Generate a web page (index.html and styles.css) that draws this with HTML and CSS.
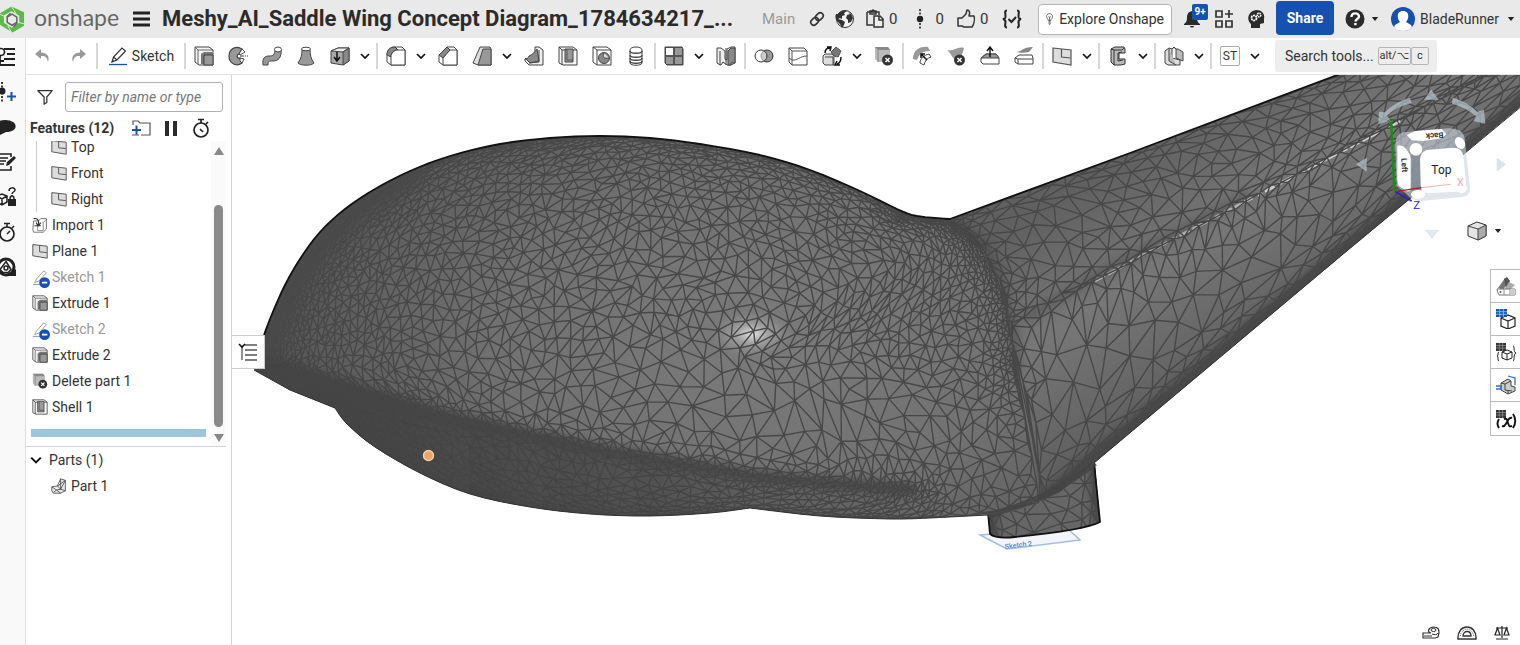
FILE: index.html
```html
<!DOCTYPE html>
<html lang="en">
<head>
<meta charset="utf-8">
<title>Meshy_AI_Saddle Wing Concept Diagram</title>
<link rel="stylesheet" href="styles.css">
</head>
<body>
<svg class="sprite" aria-hidden="true">
  <symbol id="undo" viewBox="0 0 20 20"><path d="M8 3 2 8l6 5v-3c4-.5 6 1 7 6 2-6-1-9-7-9.500z" fill="#999"/></symbol>
  <symbol id="redo" viewBox="0 0 20 20"><path d="M12 3l6 5-6 5v-3c-4-.5-6 1-7 6-2-6 1-9 7-9.500z" fill="#999"/></symbol>
  <symbol id="pencil" viewBox="0 0 20 20"><path d="M1 18.500h18" stroke="#1651b0" stroke-width="1.300"/><path d="M4 16l1.500-5L14 2l3.500 3L9 14zM5.500 11 9 14" fill="#fff" stroke="#333" stroke-width="1.200"/><path d="m4 16 .7-2.300L6.500 15z" fill="#333"/></symbol>
  <symbol id="extrude" viewBox="0 0 20 20"><path d="M1 1h14l4 3v15H5l-4-3z" fill="#f4f4f4" stroke="#444"/><path d="M4 4v14M1 1l3 3h15" fill="none" stroke="#666"/><path d="M7 8l3-2h9v12H7z" fill="#777"/><path d="M10 9h9v10h-9z" fill="#999" stroke="#444"/></symbol>
  <symbol id="revolve" viewBox="0 0 20 20"><path d="M14 3C8-1 1 3 1 10c0 8 8 11 13 7l-2-5c-3 1-4-3-1-4z" fill="#999" stroke="#444" stroke-width="1.200"/><path d="M14 3l3 3-5 3-1-1zM12 12l4 1-2 4-2-2z" fill="#fff" stroke="#444"/><path d="M12 10h8" stroke="#333" stroke-dasharray="4 1 1 1"/></symbol>
  <symbol id="sweep" viewBox="0 0 20 20"><path d="M1 19c-1-7 2-9 6-9s6-1 6-7h6c1 9-3 12-8 12-4 0-5 0-5 4z" fill="#999" stroke="#444"/><ellipse cx="16" cy="3.500" rx="3.500" ry="2.500" fill="#fff" stroke="#444"/></symbol>
  <symbol id="loft" viewBox="0 0 20 20"><path d="M6 3h8c0 6 1 10 4 14-3 3-13 3-16 0C5 13 6 9 6 3z" fill="#999" stroke="#444"/><ellipse cx="10" cy="3" rx="4.500" ry="1.800" fill="#fff" stroke="#444"/></symbol>
  <symbol id="thicken" viewBox="0 0 20 20"><path d="M1 5l7-3 11 0v13l-6 4-12-2z" fill="#aaa" stroke="#444"/><path d="M1 5l7-3h11l-6 4z" fill="#eee" stroke="#444"/><path d="M13 6v13l6-4V2z" fill="#888" stroke="#444"/><path d="M7 6v8m-3-3 3 4 3-4" stroke="#111" stroke-width="1.500" fill="none"/></symbol>
  <symbol id="chev" viewBox="0 0 10 6"><path d="m1 1 4 4 4-4" fill="none" stroke="#111" stroke-width="1.700"/></symbol>
  <symbol id="fillet" viewBox="0 0 20 20"><path d="M1 16V9c0-5 3-8 8-8h7l3 3v15H5z" fill="#fff" stroke="#444"/><path d="M1 9c0-5 3-8 8-8l3 3c-5 0-7 3-7 7z" fill="#888" stroke="#444"/><path d="M5 19v-8c0-4 3-7 7-7h7v15z" fill="#fff" stroke="#444"/></symbol>
  <symbol id="chamfer" viewBox="0 0 20 20"><path d="M1 16V9l8-8h7l3 3v15H5z" fill="#fff" stroke="#444"/><path d="M1 9l8-8 3 3-7 8z" fill="#888" stroke="#444"/><path d="M5 19v-7l7-8h7v15z" fill="#fff" stroke="#444"/></symbol>
  <symbol id="draft" viewBox="0 0 20 20"><path d="M1 17 8 1h10l1 2v16H6z" fill="#ddd" stroke="#444"/><path d="M6 19 11 3h8v16z" fill="#999" stroke="#444"/></symbol>
  <symbol id="rib" viewBox="0 0 20 20"><path d="M11 1h4l4 3v15H5l-4-4v-2h4c4-1 6-4 6-8z" fill="#eee" stroke="#444"/><path d="M1 12c1 1 3 1 4-2 3-1 6-4 8-7l2 12-9 2z" fill="#888" stroke="#444"/><path d="M15 4v12l-10 1" fill="none" stroke="#444"/></symbol>
  <symbol id="shell" viewBox="0 0 20 20"><path d="M1 1h14l4 3v15H5l-4-2z" fill="#f4f4f4" stroke="#444"/><path d="M4 4v15M1 1l3 3h15" fill="none" stroke="#444"/><path d="M7 3h8v13H7z" fill="#999" stroke="#444"/><path d="M9 3v11h6" fill="none" stroke="#555"/></symbol>
  <symbol id="hole" viewBox="0 0 20 20"><path d="M1 1h14l4 3v15H5l-4-3z" fill="#fff" stroke="#444"/><path d="M5 19V4h14M1 1l4 3" fill="none" stroke="#444"/><circle cx="12" cy="12" r="5.500" fill="#888" stroke="#444"/><path d="M12 7c-2 4 0 6 5 5" fill="#ddd" stroke="#444"/></symbol>
  <symbol id="thread" viewBox="0 0 20 20"><path d="M4 4c0-4 12-4 12 0v13c0 3-12 3-12 0z" fill="#fff" stroke="#444"/><path d="M4 5c0 3 12 3 12 0M4 9c0 3 12 3 12 0M4 12c0 3 12 3 12 0M4 15c0 3 12 3 12 0" fill="none" stroke="#444" stroke-width="1.400"/></symbol>
  <symbol id="pattern" viewBox="0 0 20 20"><path d="M1 1h17l1 2v16H3l-2-2z" fill="#555" stroke="#444"/><path d="M2 2h7v7H2z" fill="#fff"/><path d="M11 2h7v7h-7zM2 11h7v7H2zM11 11h7v7h-7z" fill="#999"/></symbol>
  <symbol id="mirror" viewBox="0 0 20 20"><path d="M1 2h4l4 3v8l2 1V3l4-2h4v16l-4 2h-4l-4-3-2 3H4l-3-2z" fill="#eee" stroke="#444"/><path d="M12 5l3-3h4v15h-4v2h-3z" fill="#888" stroke="#444"/><path d="M4 5v14M10 2v17" stroke="#444"/></symbol>
  <symbol id="boolean" viewBox="0 0 20 20"><circle cx="13" cy="10" r="6" fill="#999" stroke="#333"/><circle cx="7" cy="10" r="6" fill="#fff" fill-opacity=".5" stroke="#333"/></symbol>
  <symbol id="split" viewBox="0 0 20 20"><path d="M1 2h15l3 3v14H4l-3-3z" fill="#fff" stroke="#444"/><path d="M1 2l3 3h15M4 5v14M1 12l3 2c5 1 8-4 15-4" fill="none" stroke="#555"/></symbol>
  <symbol id="transform" viewBox="0 0 20 20"><path d="M1 10l2-2h7l2 2v9H3l-2-2z" fill="#ddd" stroke="#444"/><path d="M3 11h8v8" fill="none" stroke="#444"/><path d="M9 6l5-5 5 4-3 6-4-1z" fill="#777" stroke="#555"/><path d="M3 7c0-3 2-5 5-5M5 1l4 0-1 4M19 11c0 4-1 6-4 7M18 19h-5l2-4" fill="none" stroke="#111" stroke-width="1.500"/></symbol>
  <symbol id="delpart" viewBox="0 0 20 20"><path d="M1 1h13l2 3v12H4l-3-3z" fill="#bbb"/><path d="M1 1h13l2 3H4z" fill="#888"/><path d="M4 4v12" stroke="#888"/><circle cx="13.500" cy="14" r="5.500" fill="#333"/><path d="m11.500 12 4 4m0-4-4 4" stroke="#fff" stroke-width="1.500"/></symbol>
  <symbol id="moveface" viewBox="0 0 20 20"><path d="M1 13C1 5 7 0 16 1l2 4c-7 0-11 3-13 9z" fill="#999"/><path d="M8 17c0-4 4-8 9-9l2 3c-4 1-6 4-7 8z" fill="#fff" stroke="#444"/><path d="m15 14-6-6m0 4V8h4" stroke="#111" fill="none" stroke-width="1.500"/></symbol>
  <symbol id="delface" viewBox="0 0 20 20"><path d="M1 4c6 2 10-4 17-2-1 5-3 10-8 12C6 12 5 7 1 4z" fill="#999"/><circle cx="13.500" cy="14" r="5.500" fill="#333"/><path d="m11.500 12 4 4m0-4-4 4" stroke="#fff" stroke-width="1.500"/></symbol>
  <symbol id="offset" viewBox="0 0 20 20"><path d="M1 12l5-4h10l3 4v6H3l-2-2z" fill="#fff" stroke="#444"/><path d="M1 12l5-4h10l3 4H3z" fill="#999" stroke="#444"/><path d="M10 11V2M7 5l3-4 3 4" fill="none" stroke="#111" stroke-width="1.400"/></symbol>
  <symbol id="replace" viewBox="0 0 20 20"><path d="M2 6c5 0 7-5 17-5l-4 5c-4 1-9 1-13 0z" fill="#888"/><path d="M1 12l4-3h13l1 3v6H4l-3-2z" fill="#fff" stroke="#444"/><path d="M1 12l3 1h15M4 13v5" fill="none" stroke="#444"/></symbol>
  <symbol id="plane" viewBox="0 0 20 20"><path d="M1 2 19 4v15L1 16z" fill="#ddd" stroke="#555" stroke-width="1.200"/><path d="M9.500 3v8l9 1" fill="none" stroke="#555" stroke-width="1.200"/></symbol>
  <symbol id="frame" viewBox="0 0 20 20"><path d="M3 3l4-2h9l1 2v4h-6v6h6v5l-4 1H6l-3-3z" fill="#bbb" stroke="#333"/><path d="M3 3l3 1h8l2-2M6 4v15M10 7l4-1M10 15l5-1M10 7v8" stroke="#333" fill="none"/></symbol>
  <symbol id="sheet" viewBox="0 0 20 20"><path d="M1 5l4-3 3 1v9l8 2v5l-4 0-8 0-3-2z" fill="#ddd" stroke="#444"/><path d="M8 3l2-2 2 2v9l7 3v-9l-5-3-2 0M5 2v13l7 4" fill="#bbb" stroke="#444"/></symbol>
  <symbol id="filter" viewBox="0 0 20 20"><path d="M2 3h16l-6 7v6l-3 2v-8z" fill="none" stroke="#333" stroke-width="1.400" stroke-linejoin="round"/></symbol>
  <symbol id="folder" viewBox="0 0 20 20"><path d="M2 7V3h5l2 2h10v12H10M1 17h7" fill="none" stroke="#555" stroke-width="1.200"/><path d="M1 12h9M5.500 7.500v9" stroke="#1651b0" stroke-width="2"/></symbol>
  <symbol id="pause" viewBox="0 0 20 20"><path d="M4 3h4v15H4zM12 3h4v15h-4z" fill="#2b2b2b"/></symbol>
  <symbol id="timer" viewBox="0 0 20 20"><circle cx="10" cy="12" r="7" fill="none" stroke="#222" stroke-width="1.700"/><path d="M7 1.500h6M10 1v4M15 6l2-2M9 11l3 3" stroke="#222" stroke-width="1.700"/></symbol>
  <symbol id="import" viewBox="0 0 20 20"><path d="M2 5h6l3-3h7v13l-4 4H2l-1-3z" fill="#fff" stroke="#555"/><path d="M7 10v7h7V6M18 3l-4 4" fill="none" stroke="#777"/><path d="M2 2c5-1 7 2 6 8m-3-3 3 4 3-4M3 11h8" fill="none" stroke="#333" stroke-width="1.400"/></symbol>
  <symbol id="sketchoff" viewBox="0 0 20 20"><path d="M1 16h8" stroke="#6d8fc6"/><path d="M3 14l2-4 8-9 3 2-8 9z" fill="#fff" stroke="#999"/><circle cx="14" cy="14" r="6" fill="#1651b0"/><path d="M11 14h6" stroke="#fff" stroke-width="2"/></symbol>
  <symbol id="meshpart" viewBox="0 0 20 20"><path d="M1 11l7-1 4-9 6 2v13l-6 3H3l-2-3zM1 11l6 4 5-1 6 2M8 10l4 4V1M8 10l10-7-6 11M3 18l4-3 5 4" fill="#e8e8e8" stroke="#444"/></symbol>
  <symbol id="caret" viewBox="0 0 10 6"><path d="M1 .5h8L5 5.500z" fill="#222"/></symbol>
</svg>

<header class="header">
  <a class="brand" href="#" aria-label="onshape">
    <svg class="brand-mark" viewBox="0 0 26 28"><path d="M12 1 25 7v14l-12 7L0 20V8z" fill="#5ab947"/><path d="M12 6l8 4.500V18l-8 5-8-5V10z" fill="#e9e9e9"/><path d="M0 9l8 4M12 1l5 8M25 19l-8-2M12 28l-4-7" stroke="#e9e9e9" stroke-width="1"/><path d="M12.500 9l5 3v5.500l-5 3-5-3V12z" fill="none" stroke="#666" stroke-width="1.600"/><path d="M12.500 12.500l2 1.200v2.600l-2 1.200-2-1.200v-2.600z" fill="#e9e9e9"/><path d="M7 12l4-4M18 18l-4 4" stroke="#666" stroke-width="1.600"/></svg>
    <span class="brand-name">onshape</span>
  </a>
  <button class="bare menu" aria-label="Menu"><svg width="18" height="16" viewBox="0 0 18 16"><path d="M0 2h17M0 8h17M0 14h17" stroke="#222" stroke-width="2.800"/></svg></button>
  <h1 class="title">Meshy_AI_Saddle Wing Concept Diagram_1784634217_...</h1>
  <span class="branch">Main</span>
  <div class="doc-tools">
    <button class="bare" aria-label="Link"><svg width="16" height="16" viewBox="0 0 16 16"><g fill="none" stroke="#333" stroke-width="1.600"><rect x="7.500" y="1.500" width="6" height="8.500" rx="3" transform="rotate(45 10.500 5.500)"/><rect x="2.500" y="6" width="6" height="8.500" rx="3" transform="rotate(45 5.500 10.500)"/></g></svg></button>
    <button class="bare" aria-label="Public document"><svg width="20" height="20" viewBox="0 0 20 20"><circle cx="10" cy="10" r="8.500" fill="#f5f5f5" stroke="#333"/><path d="M3 5c3-4 7-4 9-3L9 4l1 2-3 1v3l-2-1-2 1 4 1 3 2-1 3-2 3-2-4-3-3c-2-3-2-5-1-7zM13 3c3 1 4 3 5 6l-2 4-3 1v-3l-2-2 1-3 3-1z" fill="#333"/></svg></button>
    <button class="bare count"><svg width="20" height="20" viewBox="0 0 20 20"><path d="M6 3h8v3M2 3h12M2 3v13h6M5 5V2h2l1-1 1 1h2v3z" fill="none" stroke="#333" stroke-width="1.500"/><path d="M9 7h6l3 3v8H9zM14 7v4h4" fill="#eee" stroke="#333" stroke-width="1.500"/></svg><span>0</span></button>
    <button class="bare count wide"><svg width="12" height="20" viewBox="0 0 12 20"><path d="M6 0v20" stroke="#222" stroke-width="1.600" stroke-dasharray="2 1.500"/><circle cx="6" cy="10" r="3.200" fill="#222"/></svg><span>0</span></button>
    <button class="bare count"><svg width="20" height="20" viewBox="0 0 20 20"><path d="M2 9h4l4-4 1-4c3 0 3 3 2 6h5c1 3 0 8-2 11H8l-2-1H2z" fill="none" stroke="#333" stroke-width="1.500" stroke-linejoin="round"/></svg><span>0</span></button>
    <button class="bare checks" aria-label="Checks"><svg width="20" height="20" viewBox="0 0 20 20"><path d="M5 1.500C2 1.500 3.500 4 3.500 7S3 9.500 1 10c2 .5 2.500 1 2.500 3S2 18.500 5 18.500M15 1.500c3 0 1.500 2.500 1.500 5.500s.5 2.500 2.500 3c-2 .5-2.500 1-2.500 3s1.500 5.500-1.500 5.500M6.500 10l3 3 4.500-5" fill="none" stroke="#222" stroke-width="2"/></svg></button>
  </div>
  <button class="explore"><svg width="12" height="20" viewBox="0 0 12 20"><path d="M4 13c0-3-3-4-3-7s2-5 5-5 5 2 5 5-3 4-3 7zM4 15h4M4 17h4M5 19h2M6 13V7M4 6l2 1 2-1" fill="none" stroke="#333" stroke-width="1.200"/></svg>Explore Onshape</button>
  <div class="user-tools">
    <button class="bare bell" aria-label="Notifications"><svg width="17" height="18" viewBox="0 0 17 18"><path d="M8 1c-4 1-5 3-5 7 0 3-1 5-3 6v1h16v-1c-2-1-3-3-3-6 0-4-1-6-5-7zM6 16h4c0 2-4 2-4 0z" fill="#2b2b2b"/></svg><span class="badge">9+</span></button>
    <button class="bare" aria-label="Apps"><svg width="20" height="20" viewBox="0 0 20 20"><path d="M2 2h6v6H2zM2 12h6v6H2zM12 12h6v6h-6zM15 1v8M11 5h8" fill="none" stroke="#333" stroke-width="1.700"/></svg></button>
    <button class="bare" aria-label="Learning"><svg width="18" height="20" viewBox="0 0 18 20"><path d="M4 19v-4C-1 11 1 2 9 1c7 0 9 5 8 9v4l-4 1v4z" fill="#2b2b2b"/><circle cx="7" cy="9" r="2.500" fill="none" stroke="#fff" stroke-width="1.800" stroke-dasharray="2 .6"/><circle cx="12" cy="6" r="1.800" fill="none" stroke="#fff" stroke-width="1.600" stroke-dasharray="1.500 .5"/></svg></button>
  </div>
  <button class="share">Share</button>
  <button class="bare help" aria-label="Help"><svg width="20" height="20" viewBox="0 0 20 20"><circle cx="10" cy="10" r="9.500" fill="#2b2b2b"/><path d="M6.500 8c0-5 7.500-4.500 7.500-.5 0 2.500-3.500 2.500-3.500 5M10.400 14v2.200" fill="none" stroke="#fff" stroke-width="2.400"/></svg><svg class="caret"><use href="#caret"/></svg></button>
  <button class="bare account"><svg width="24" height="24" viewBox="0 0 24 24"><circle cx="12" cy="12" r="12" fill="#1651b0"/><path d="M12 4c7 0 6 8 3 11l5 3c1 1 1 3 0 3-3 4-13 4-16 0-1 0-1-2 0-3l5-3C6 12 5 4 12 4z" fill="#fff"/></svg><span>BladeRunner</span><svg class="caret"><use href="#caret"/></svg></button>
</header>

<div class="workspace">
  <nav class="rail" aria-label="Side tools">
    <button class="bare" aria-label="Feature list"><svg width="20" height="20" viewBox="0 0 20 20"><path d="M8 2h11M11 7h8M8 12h11M8 18h11M4 9v9h4M4 14h4" stroke="#222" stroke-width="1.800" fill="none"/><circle cx="5" cy="5" r="3.500" fill="#fff" stroke="#222" stroke-width="1.700"/></svg></button>
    <button class="bare" aria-label="Add version"><svg width="20" height="20" viewBox="0 0 20 20"><path d="M6 0v20" stroke="#222" stroke-width="1.800" stroke-dasharray="2 1.500"/><circle cx="6" cy="9" r="3.500" fill="#222"/><path d="M15.500 10v9M11 14.500h9" stroke="#1651b0" stroke-width="2"/></svg></button>
    <button class="bare" aria-label="Comments"><svg width="20" height="20" viewBox="0 0 20 20"><path d="M9 3c14 0 14 12 1 12l-6 3v-4C-3 11-1 3 9 3z" fill="#222"/></svg></button>
    <button class="bare" aria-label="Notes"><svg width="20" height="20" viewBox="0 0 20 20"><path d="M15 5V2H1v16h14v-4M4 6h8M4 9h6M4 12h4" fill="none" stroke="#222" stroke-width="1.600"/><path d="m10 14 1-4 7-6 2 2-7 7z" fill="#222"/></svg></button>
    <button class="bare" aria-label="Part permissions"><svg width="20" height="20" viewBox="0 0 20 20"><path d="M1 9l5-2 5 2v6l-5 3-5-3zM1 9l5 3 5-3M6 12v6" fill="none" stroke="#222" stroke-width="1.500"/><path d="M12 12h8v7h-8z" fill="#222"/><path d="M14 12c0-4 4-4 4 0M13 4c0-4 6-4 6-1 0 2-3 2-3 4M16 8v1" fill="none" stroke="#222" stroke-width="1.500"/></svg></button>
    <button class="bare" aria-label="History"><svg width="20" height="20" viewBox="0 0 20 20"><circle cx="11" cy="12" r="7" fill="none" stroke="#222" stroke-width="1.700"/><path d="M8 1.500h6M11 1v4M16 6l2-2M11 12l3-3M0 9h5M0 12h4M0 15h5" stroke="#222" stroke-width="1.500"/></svg></button>
    <button class="bare" aria-label="Assistant"><svg width="20" height="20" viewBox="0 0 20 20"><circle cx="10" cy="10" r="8" fill="#fff" stroke="#222" stroke-width="3"/><path d="M12 19h8v-7z" fill="#222"/><path d="M10 4.500l5 8-3 3H7l-3-3z" fill="none" stroke="#222" stroke-width="1.500"/><circle cx="10" cy="11" r="2" fill="none" stroke="#222" stroke-width="1.500"/></svg></button>
  </nav>

  <div class="main">
    <div class="toolbar" role="toolbar">
      <button class="tool" aria-label="Undo"><svg><use href="#undo"/></svg></button>
      <button class="tool" aria-label="Redo"><svg><use href="#redo"/></svg></button>
      <i class="sep"></i>
      <button class="tool sketch"><svg><use href="#pencil"/></svg>Sketch</button>
      <i class="sep"></i>
      <button class="tool"><svg><use href="#extrude"/></svg></button>
      <button class="tool"><svg><use href="#revolve"/></svg></button>
      <button class="tool"><svg><use href="#sweep"/></svg></button>
      <button class="tool"><svg><use href="#loft"/></svg></button>
      <button class="tool"><svg><use href="#thicken"/></svg></button>
      <button class="more"><svg><use href="#chev"/></svg></button>
      <i class="sep"></i>
      <button class="tool"><svg><use href="#fillet"/></svg></button>
      <button class="more"><svg><use href="#chev"/></svg></button>
      <button class="tool"><svg><use href="#chamfer"/></svg></button>
      <button class="tool"><svg><use href="#draft"/></svg></button>
      <button class="more"><svg><use href="#chev"/></svg></button>
      <button class="tool"><svg><use href="#rib"/></svg></button>
      <button class="tool"><svg><use href="#shell"/></svg></button>
      <button class="tool"><svg><use href="#hole"/></svg></button>
      <button class="tool"><svg><use href="#thread"/></svg></button>
      <i class="sep"></i>
      <button class="tool"><svg><use href="#pattern"/></svg></button>
      <button class="more"><svg><use href="#chev"/></svg></button>
      <button class="tool"><svg><use href="#mirror"/></svg></button>
      <i class="sep"></i>
      <button class="tool"><svg><use href="#boolean"/></svg></button>
      <button class="tool"><svg><use href="#split"/></svg></button>
      <button class="tool"><svg><use href="#transform"/></svg></button>
      <button class="more"><svg><use href="#chev"/></svg></button>
      <button class="tool"><svg><use href="#delpart"/></svg></button>
      <i class="sep"></i>
      <button class="tool"><svg><use href="#moveface"/></svg></button>
      <button class="tool"><svg><use href="#delface"/></svg></button>
      <button class="tool"><svg><use href="#offset"/></svg></button>
      <button class="tool"><svg><use href="#replace"/></svg></button>
      <i class="sep"></i>
      <button class="tool"><svg><use href="#plane"/></svg></button>
      <button class="more"><svg><use href="#chev"/></svg></button>
      <i class="sep"></i>
      <button class="tool"><svg><use href="#frame"/></svg></button>
      <button class="more"><svg><use href="#chev"/></svg></button>
      <i class="sep"></i>
      <button class="tool"><svg><use href="#sheet"/></svg></button>
      <button class="more"><svg><use href="#chev"/></svg></button>
      <i class="sep"></i>
      <button class="tool"><span class="st">ST</span></button>
      <button class="more"><svg><use href="#chev"/></svg></button>
      <button class="search">Search tools...<span class="keys"><kbd>alt/⌥</kbd><kbd>c</kbd></span></button>
    </div>

    <div class="stage">
      <aside class="panel">
        <div class="filter">
          <svg class="icon18"><use href="#filter"/></svg>
          <input type="text" placeholder="Filter by name or type" aria-label="Filter by name or type">
        </div>
        <div class="features-head">
          <h2>Features (12)</h2>
          <button class="bare" aria-label="New folder"><svg class="icon20"><use href="#folder"/></svg></button>
          <button class="bare" aria-label="Pause"><svg class="icon20"><use href="#pause"/></svg></button>
          <button class="bare" aria-label="Regeneration time"><svg class="icon20"><use href="#timer"/></svg></button>
        </div>
        <div class="features">
          <div class="tree">
            <ul class="rows planes">
              <li><svg><use href="#plane"/></svg>Top</li>
              <li><svg><use href="#plane"/></svg>Front</li>
              <li><svg><use href="#plane"/></svg>Right</li>
            </ul>
            <ul class="rows">
              <li><svg><use href="#import"/></svg>Import 1</li>
              <li><svg><use href="#plane"/></svg>Plane 1</li>
              <li class="off"><svg><use href="#sketchoff"/></svg>Sketch 1</li>
              <li><svg><use href="#extrude"/></svg>Extrude 1</li>
              <li class="off"><svg><use href="#sketchoff"/></svg>Sketch 2</li>
              <li><svg><use href="#extrude"/></svg>Extrude 2</li>
              <li><svg><use href="#delpart"/></svg>Delete part 1</li>
              <li><svg><use href="#shell"/></svg>Shell 1</li>
            </ul>
            <div class="rollback"></div>
          </div>
          <div class="scroll"><i class="up"></i><i class="thumb"></i><i class="down"></i></div>
        </div>
        <div class="parts">
          <button class="bare parts-head"><svg><use href="#chev"/></svg>Parts (1)</button>
          <ul class="rows"><li class="part"><svg><use href="#meshpart"/></svg>Part 1</li></ul>
        </div>
      </aside>

      <main class="viewport">
        <svg class="model" viewBox="232 75 1288 570" preserveAspectRatio="xMinYMin slice" role="img" aria-label="Saddle wing mesh model">
          <defs>
            <radialGradient id="gBody" gradientUnits="userSpaceOnUse" cx="760" cy="340" r="480" gradientTransform="matrix(1 0 0 .62 0 130)"><stop offset="0" stop-color="#7b7b7b"/><stop offset=".55" stop-color="#717171"/><stop offset="1" stop-color="#565656"/></radialGradient>
            <linearGradient id="gWing" gradientUnits="userSpaceOnUse" x1="1150" y1="140" x2="1270" y2="330"><stop offset="0" stop-color="#606060"/><stop offset=".5" stop-color="#777"/><stop offset="1" stop-color="#616161"/></linearGradient>
            <radialGradient id="gSpot"><stop offset="0" stop-color="#fff" stop-opacity=".8"/><stop offset=".4" stop-color="#ddd" stop-opacity=".4"/><stop offset="1" stop-color="#aaa" stop-opacity="0"/></radialGradient>
            <linearGradient id="gBelly" gradientUnits="userSpaceOnUse" x1="400" y1="0" x2="960" y2="0"><stop offset="0" stop-color="#444" stop-opacity=".9"/><stop offset=".45" stop-color="#444" stop-opacity=".7"/><stop offset="1" stop-color="#444" stop-opacity="0"/></linearGradient>
            <filter id="soft4" filterUnits="userSpaceOnUse" x="232" y="60" width="1300" height="500"><feGaussianBlur stdDeviation="4"/></filter>
            <filter id="soft10" filterUnits="userSpaceOnUse" x="232" y="60" width="1300" height="500"><feGaussianBlur stdDeviation="10"/></filter>
            <clipPath id="cBody"><path id="bodyShape"/></clipPath>
            <clipPath id="cWing"><path id="wingShape"/></clipPath>
            <clipPath id="cLeg"><path id="legShape" d="M988 505 1094 455 1100 522Q1085 530 1015 537 996 539 990 534z"/></clipPath>
            <clipPath id="cSil"><path d="M880 202 917 217 952 219 1020 193 1060 400H880z"/></clipPath>
          </defs>
          <path d="M980 535 1067 528 1080 540 1007 549z" fill="#f2f6fc" stroke="#a4bde0" stroke-width="1.500"/>
          <text x="1005" y="549" class="plane-tag" transform="rotate(-7 1005 549)">Sketch 2</text>
          <g clip-path="url(#cLeg)"><path d="M980 450h125v95H980z" fill="#666"/><path id="legMesh" class="mesh"/><path d="M990 510v30M1096 465l4 60" stroke="#444" stroke-width="14" filter="url(#soft4)"/></g>
          <path d="M988 513l2 21q6 5 25 3 70-7 85-15l-6-60" class="edge"/>
          <g clip-path="url(#cWing)"><path d="M940 0h600v530H940z" fill="url(#gWing)"/><path d="M1040 505 1540 90" stroke="#444" stroke-width="18" filter="url(#soft4)"/><path d="M1095 281 1160 246 1400 121" class="glint"/><path id="wingMesh" class="mesh"/><path d="M1025 318 1110 268 1250 194" fill="none" stroke="#474747" stroke-width="7" opacity=".6" filter="url(#soft4)"/></g>
          <g clip-path="url(#cBody)">
            <path d="M240 120h820v410H240z" fill="url(#gBody)"/>
            <ellipse cx="752" cy="334" rx="40" ry="23" fill="url(#gSpot)"/>
            <path id="bodyMesh" class="mesh"/>
            <path d="M250 350 340 378 450 412 600 447 760 478 925 492 960 530H250z" fill="url(#gBelly)" filter="url(#soft4)"/>
            <path d="M255 362 340 390 450 420 600 450 760 477 915 490" fill="none" stroke="#444" stroke-width="11" filter="url(#soft4)"/>
            <path d="M262 345Q300 225 420 165" fill="none" stroke="#484848" stroke-width="34" filter="url(#soft10)"/>
          </g>
          <path d="M905 210 952 219 985 246 1003 290 1014 340 1017 372" fill="none" stroke="#444" stroke-width="8" opacity=".7" filter="url(#soft4)" clip-path="url(#cSil)"/>
          <path d="M988 515Q1050 500 1095 463" fill="none" stroke="#444" stroke-width="6" opacity=".8"/>
          <path id="bottomEdge" class="edge thin"/>
          <path id="topEdge" class="edge"/>
          <path d="M1094 463 1342 255 1540 91M988 515 930 518" class="edge thin"/>
          <circle cx="428.500" cy="455.500" r="5" fill="#eba566" stroke="#f6cfa6" stroke-width="1.500"/>
        </svg>

        <button class="list-toggle" aria-label="Toggle list"><svg width="20" height="20" viewBox="0 0 20 20"><path d="M7 3h12M7 8h12M7 13h12M7 18h12" stroke="#555" stroke-width="1.300"/><path d="M4 5v13" stroke="#555" stroke-width="1.300"/><path d="m1 2 3 3 3-3" fill="none" stroke="#111" stroke-width="1.600"/></svg></button>

        <svg class="viewcube" viewBox="0 0 600 540">
          <g fill="#c3d3de" opacity=".62"><path d="M270 68Q225 80 195 112l-18-2-2 38 36-12-10-14q30-28 74-38zM398 68q45 12 74 42l20-6 4 42-36-8 8-14q-28-26-72-38z"/><path d="M334 44l22 30h-44zM108 268l32-20v42zM558 268l-28-20v42z"/></g>
          <path d="M314 464h44l-22 28z" fill="#dfe9f0"/>
          <path d="M214 150 223 350" stroke="#159015" stroke-width="7"/><text x="202" y="160" class="axis" fill="#159015">Y</text>
          <path d="M226 350 275 378" stroke="#2a22c4" stroke-width="5"/><text x="280" y="402" class="axis" fill="#2a22c4">Z</text>
          <path d="M250 172 385 160Q430 160 434 190l16 150q0 25-25 26l-120 12q-30 0-45-20l-30-25-4-120q0-35 24-41z" fill="#cbd6de" fill-opacity=".6"/>
          <path d="M274 220h30v130l-30-5zM385 165v60M355 165v60" fill="#74828c" stroke="#74828c" opacity=".6"/>
          <path d="M260 180 285 168 365 162 379 178 365 190 310 198 275 196z" fill="#fff"/><text x="0" y="0" class="face-side" transform="translate(370 172) rotate(176)">Back</text>
          <path d="M232 212q16-6 32 18 8 10 8 20v92q0 10-14 6l-20-14q-6-6-6-20z" fill="#fff"/><text x="0" y="0" class="face-side" transform="translate(244 250) rotate(87)">Left</text>
          <path d="M328 224 400 218Q428 218 430 245L438 322Q440 348 414 350L325 354Q302 354 302 330L300 252Q302 226 328 224z" fill="#fff"/>
          <circle cx="288" cy="223" r="19" fill="#fff"/><ellipse cx="420" cy="204" rx="14" ry="19" fill="#fff" transform="rotate(-30 420 204)"/><ellipse cx="294" cy="358" rx="21" ry="13" fill="#fff"/><ellipse cx="430" cy="344" rx="14" ry="8" fill="#fff" transform="rotate(-40 430 344)"/>
          <path d="M226 350 305 338" stroke="#a02020" stroke-width="4"/><path d="M305 338 392 328" stroke="#f0b0b0" stroke-width="3"/><text x="410" y="334" class="axis" fill="#f0b0b0">X</text>
          <text x="334" y="297" class="face-top">Top</text>
        </svg>

        <button class="bare shade" aria-label="Shading"><svg width="20" height="20" viewBox="0 0 20 20"><path d="M1 5l9-4 9 3v11l-8 4-10-4z" fill="#e4e4e4" stroke="#333"/><path d="M11 8l8-4v11l-8 4z" fill="#aaa" stroke="#444"/><path d="M1 5l10 3" stroke="#444"/></svg><svg class="caret"><use href="#caret"/></svg></button>

        <div class="side-tools">
          <button aria-label="Appearance"><svg viewBox="0 0 20 20"><path d="M2 12 9 2l4 3-6 9z" fill="#777"/><path d="M8 3l3-2 3 4-4 8z" fill="#555"/><path d="M13 6l6 3-5 5H8z" fill="#aaa"/><path d="M1 13h18v6H3q-2-3-2-6z" fill="#fff" stroke="#777"/><path d="M8 13v6M14 13v6" stroke="#888"/><path d="M14 13h5v6h-5z" fill="#ccc"/><circle cx="4.500" cy="16" r="1" fill="#555"/></svg></button>
          <button aria-label="Part table"><svg viewBox="0 0 20 20"><path d="M5 9l7-3 7 3v8l-7 3-7-3zM5 9l7 3 7-3M12 12v8" fill="#fff" stroke="#222" stroke-width="1.200"/><path d="M0 0h11v8H0z" fill="#1651b0"/><path d="M0 2.700h11M0 5.300h11M3.700 0v8M7.300 0v8" stroke="#9cc0f5" stroke-width=".8"/></svg></button>
          <button aria-label="Configurations"><svg viewBox="0 0 20 20"><path d="M6 10l5-2 5 2v6l-5 2-5-2zM6 10l5 2 5-2M11 12v6" fill="#fff" stroke="#222"/><path d="M3 10c-2 0 0 4-2 4 2 0 0 5 2 5M17 4c2 0 0 6 3 7-3 1-1 8-3 8" fill="none" stroke="#222"/><path d="M0 1h10v8H0z" fill="#333"/><path d="M0 3.500h10M0 6h10M3.300 1v8M6.600 1v8" stroke="#999" stroke-width=".7"/></svg></button>
          <button aria-label="Properties"><svg viewBox="0 0 20 20"><path d="M5 8l7-4 3 2v5l4 1v4l-7 3-7-4z" fill="#ccc" stroke="#444"/><path d="M5 8l4 1v6l7 1M9 9l6-3M12 16v3" fill="none" stroke="#444"/><path d="M12 1l7 2v7M0 11h5v3H0" fill="none" stroke="#2b6fd0" stroke-width="1.300"/></svg></button>
          <button aria-label="Variables"><svg viewBox="0 0 20 20"><path d="M3 10c-2 3-2 6 0 9M17 5c3 4 3 10 0 14M6 17c3 1 3-1 5-4s2-5 5-4M8 10c3-1 3 1 4 4s1 4 4 3" fill="none" stroke="#111" stroke-width="1.900"/><path d="M0 1h10v8H0z" fill="#333"/><path d="M0 3.500h10M0 6h10M3.300 1v8M6.600 1v8" stroke="#999" stroke-width=".7"/></svg></button>
        </div>

        <div class="measure">
          <button class="bare" aria-label="Measure"><svg width="18" height="14" viewBox="0 0 18 14"><path d="M1 7h8c-4-1-3-5 2-6 6 0 6 3 6 6l-1 4-3 1H1z" fill="#fff" stroke="#333" stroke-width="1.200"/><ellipse cx="11.500" cy="4" rx="2.500" ry="1.500" fill="none" stroke="#333"/><path d="M3 9v2M5 9v2M7 9v2M9 9v2M16 7c-1 2-3 2-6 1" stroke="#333" fill="none"/></svg></button>
          <button class="bare" aria-label="Protractor"><svg width="20" height="14" viewBox="0 0 20 14"><path d="M1 13C0-3 20-3 19 13zM6 10c0-6 8-6 8 0z" fill="#fff" stroke="#333" stroke-width="1.400"/><path d="M3.500 10C4 1 16 1 16.500 10" fill="none" stroke="#666" stroke-dasharray="1 1"/></svg></button>
          <button class="bare" aria-label="Mass properties"><svg width="16" height="14" viewBox="0 0 16 14"><path d="M2 2h12M8 0v12M2 13h12M3.500 2 1 9h5zM12.500 2 10 9h5z" fill="none" stroke="#222" stroke-width="1.200"/></svg></button>
        </div>
      </main>
    </div>
  </div>
</div>
<script src="mesh.js"></script>
</body>
</html>
```
FILE: styles.css
```css
* { box-sizing: border-box; }
html, body { height: 100%; }
body {
  margin: 0;
  display: flex;
  flex-direction: column;
  overflow: hidden;
  background: #fff;
  color: #333;
  font: 14px/20px Roboto, "Liberation Sans", sans-serif;
}
button { font: inherit; color: inherit; cursor: pointer; }
.sprite { position: absolute; width: 0; height: 0; }
.bare {
  display: flex;
  align-items: center;
  justify-content: center;
  padding: 0;
  border: 0;
  background: none;
}
.caret { width: 8px; height: 6px; }
.icon18 { width: 18px; height: 18px; }
.icon20 { width: 20px; height: 20px; }

.header {
  display: flex;
  align-items: center;
  flex: none;
  height: 38px;
  background: #e9e9e9;
  white-space: nowrap;
}
.brand { display: flex; align-items: center; gap: 9px; width: 133px; color: #666; text-decoration: none; }
.brand-mark { width: 25px; height: 28px; }
.brand-name { font: 23px/28px Lato, sans-serif; padding-bottom: 4px; }
.menu { width: 18px; margin-right: 11px; }
.title { margin: 0; min-width: 586px; font-size: 22px; line-height: 30px; font-weight: 700; color: #2b2b2b; }
.branch { margin-left: 14px; width: 42px; font-size: 15px; color: #999; }
.doc-tools { display: flex; align-items: center; gap: 10px; margin-left: 5px; width: 229px; }
.count { gap: 4px; font-size: 15px; }
.count.wide { gap: 9px; margin: 0 2px 0 7px; }
.checks { margin-left: 4px; }
.explore {
  display: flex;
  align-items: center;
  gap: 6px;
  width: 134px;
  height: 31px;
  padding: 0 7px;
  border: 1px solid #b5b5b5;
  border-radius: 4px;
  background: #fff;
}
.user-tools { display: flex; align-items: center; gap: 13px; margin-left: 12px; width: 92px; }
.bell { position: relative; }
.badge {
  position: absolute;
  left: 8px;
  top: -6px;
  width: 16px;
  height: 16px;
  border-radius: 2px;
  background: #1651b0;
  color: #fff;
  font-size: 10px;
  line-height: 16px;
  font-weight: 700;
}
.share { width: 58px; height: 34px; padding: 0; margin-bottom: 2px; border: 0; border-radius: 4px; background: #1651b0; color: #fff; font-weight: 700; }
.help { gap: 6px; margin-left: 11px; }
.account { gap: 5px; margin-left: 12px; }
.account .caret { margin-left: 3px; }

.workspace { display: flex; flex: 1; min-height: 0; }
.rail {
  display: flex;
  flex-direction: column;
  align-items: flex-start;
  gap: 15px;
  flex: none;
  width: 26px;
  padding-top: 9px;
  overflow: hidden;
  background: #f9f9f9;
  border-right: 1px solid #dcdcdc;
}
.rail .bare { margin-left: -4px; }
.main { display: flex; flex-direction: column; flex: 1; min-width: 0; }

.toolbar { display: flex; align-items: center; flex: none; height: 37px; border-bottom: 1px solid #e2e2e2; white-space: nowrap; }
.tool { display: flex; align-items: center; justify-content: center; flex: none; width: 34px; height: 32px; padding: 0; border: 0; background: none; }
.tool svg { width: 20px; height: 20px; }
.sketch { width: 84px; gap: 4px; }
.more { flex: none; width: 18px; height: 32px; padding: 0 0 0 3px; border: 0; background: none; text-align: left; }
.more svg { display: block; width: 10px; height: 6px; }
.sep { flex: none; width: 2px; height: 26px; margin: 0 1px; background: #d8d8d8; }
.st { width: 20px; height: 20px; border: 1px solid #aaa; border-radius: 2px; font-size: 12px; line-height: 18px; }
.search { display: flex; align-items: center; gap: 4px; height: 32px; margin-left: 10px; padding: 0 8px 0 10px; border: 0; border-radius: 2px; background: #ededed; }
.keys { display: flex; }
kbd { height: 18px; padding: 0 1px; border: 1px solid #b5b5b5; border-radius: 2px; font: 11px/16px Roboto, "DejaVu Sans", sans-serif; }
kbd + kbd { padding: 0 5px; }
.tool:nth-child(2) { margin-left: 1px; }

.stage { display: flex; flex: 1; min-height: 0; }
.panel { display: flex; flex-direction: column; flex: none; width: 206px; border-right: 1px solid #d4d4d4; background: #fff; }
.filter { display: flex; align-items: center; gap: 11px; padding: 7px 8px 0 10px; }
.filter svg { flex: none; }
.filter input { flex: 1; min-width: 0; height: 30px; padding: 0 5px; border: 1px solid #b0b0b0; border-radius: 3px; font: 14px/20px Roboto, sans-serif; }
.filter input::placeholder { color: #777; font-style: italic; }
.features-head { display: flex; align-items: center; gap: 10px; padding: 6px 0 3px 4px; }
.features-head h2 { width: 91px; margin: 0; font-size: 14px; line-height: 20px; font-weight: 700; }
.features { display: flex; height: 306px; overflow: hidden; border-bottom: 1px solid #d4d4d4; margin-right: 5px; }
.tree { flex: 1; margin-top: -7px; }
.rows { margin: 0; padding: 0; list-style: none; }
.rows li { display: flex; align-items: center; gap: 4px; height: 26px; padding-left: 6px; white-space: nowrap; }
.rows svg { width: 16px; height: 16px; }
.rows.planes { margin-left: 10px; border-left: 1px solid #ccc; }
.rows.planes li { padding-left: 14px; }
.rows .off { color: #999; }
.rows .off svg { width: 18px; height: 18px; margin: 4px -2px 0 0; }
.rollback { height: 8px; margin: 9px 0 0 5px; background: #9fc5dd; }
.scroll { display: flex; flex-direction: column; align-items: center; width: 15px; margin-left: 5px; padding-top: 6px; background: #fafafa; }
.scroll i { flex: none; }
.up { border: 5px solid transparent; border-top: 0; border-bottom: 8px solid #888; }
.down { margin-top: 7px; border: 5px solid transparent; border-bottom: 0; border-top: 8px solid #888; }
.thumb { width: 9px; height: 222px; margin-top: 50px; border-radius: 5px; background: #8a8a8a; }
.parts-head { height: 26px; gap: 7px; padding-left: 4px; }
.parts-head svg { width: 12px; height: 8px; }
.rows .part { padding-left: 25px; }

.viewport { position: relative; flex: 1; min-width: 0; overflow: hidden; }
.model { display: block; width: 100%; height: 100%; }
.mesh { fill: none; stroke: #484848; stroke-width: 1.400px; stroke-linejoin: round; }
.edge { fill: none; stroke: #111; stroke-width: 1.800px; stroke-linejoin: round; }
.edge.thin { stroke: #333; stroke-width: 1px; }
.glint { fill: none; stroke: #d0d0d0; stroke-width: 3px; stroke-dasharray: 11 3 20 6 5 3; }
.plane-tag { fill: #6f8fc8; font: 700 7px Roboto, sans-serif; }
.list-toggle { position: absolute; left: 0; top: 260px; display: flex; align-items: center; justify-content: center; width: 33px; height: 34px; padding: 0; border: 1px solid #ccc; border-left: 0; background: #fff; }
.viewcube { position: absolute; right: 0; top: 0; width: 200px; height: 180px; }
.axis { font: 34px Roboto, sans-serif; }
.face-top { font: 36px Roboto, sans-serif; fill: #222; }
.face-side { font: 700 24px Roboto, sans-serif; fill: #333; }
.shade { position: absolute; right: 18px; top: 146px; gap: 7px; }
.side-tools { position: absolute; right: 0; top: 194px; width: 30px; border: 1px solid #bbb; border-right: 0; background: #fff; }
.side-tools button { display: flex; align-items: center; justify-content: flex-end; width: 100%; height: 33px; padding: 0 3px 0 0; border: 0; border-bottom: 1px solid #bbb; background: none; }
.side-tools button:last-child { border-bottom: 0; }
.side-tools svg { width: 22px; height: 20px; }
.measure { position: absolute; right: 10px; bottom: 5px; display: flex; gap: 17px; }
```
FILE: mesh.js
```js
// Builds the triangulated surface of the body, the wing and the leg.
(function () {
  let seed = 20417;
  function rand() {
    seed = (seed + 0x6d2b79f5) | 0;
    let t = Math.imul(seed ^ (seed >>> 15), 1 | seed);
    t = (t + Math.imul(t ^ (t >>> 7), 61 | t)) ^ t;
    return ((t ^ (t >>> 14)) >>> 0) / 4294967296;
  }

  // Bowyer-Watson triangulation, returned as unique edges.
  function edgesOf(points) {
    const n = points.length;
    const p = points.concat([[-9000, -9000], [9000, -9000], [0, 14000]]);
    function tri(a, b, c) {
      const A = p[a], B = p[b], C = p[c];
      const d = 2 * (A[0] * (B[1] - C[1]) + B[0] * (C[1] - A[1]) + C[0] * (A[1] - B[1])) || 1e-9;
      const a2 = A[0] * A[0] + A[1] * A[1], b2 = B[0] * B[0] + B[1] * B[1], c2 = C[0] * C[0] + C[1] * C[1];
      const x = (a2 * (B[1] - C[1]) + b2 * (C[1] - A[1]) + c2 * (A[1] - B[1])) / d;
      const y = (a2 * (C[0] - B[0]) + b2 * (A[0] - C[0]) + c2 * (B[0] - A[0])) / d;
      return { v: [a, b, c], x: x, y: y, r: (A[0] - x) ** 2 + (A[1] - y) ** 2 };
    }
    const order = points.map((q, i) => i).sort((i, j) => p[i][0] - p[j][0]);
    let open = [tri(n, n + 1, n + 2)];
    const done = [];
    for (const i of order) {
      const q = p[i], keep = [], rim = new Map();
      for (const t of open) {
        const dx = q[0] - t.x, dy = q[1] - t.y;
        if (dx > 0 && dx * dx > t.r) { done.push(t); continue; }
        if (dx * dx + dy * dy < t.r) {
          for (let k = 0; k < 3; k++) {
            const a = Math.min(t.v[k], t.v[(k + 1) % 3]), b = Math.max(t.v[k], t.v[(k + 1) % 3]);
            const key = a * 100000 + b;
            if (rim.has(key)) rim.delete(key); else rim.set(key, [a, b]);
          }
        } else keep.push(t);
      }
      rim.forEach(e => keep.push(tri(e[0], e[1], i)));
      open = keep;
    }
    const out = new Map();
    for (const t of done.concat(open)) {
      for (let k = 0; k < 3; k++) {
        const a = Math.min(t.v[k], t.v[(k + 1) % 3]), b = Math.max(t.v[k], t.v[(k + 1) % 3]);
        if (b < n) out.set(a * 100000 + b, [a, b]);
      }
    }
    return [...out.values()];
  }

  // Random points no closer together than the local spacing.
  function scatter(x0, y0, x1, y1, tries, inside, spacing) {
    const cell = 8, grid = new Map(), pts = [];
    for (let n = 0; n < tries; n++) {
      const x = x0 + rand() * (x1 - x0), y = y0 + rand() * (y1 - y0);
      if (!inside(x, y)) continue;
      const s = spacing(x, y), m = Math.ceil(s / cell);
      const cx = Math.floor(x / cell), cy = Math.floor(y / cell);
      let ok = true;
      for (let i = cx - m; ok && i <= cx + m; i++) {
        for (let j = cy - m; ok && j <= cy + m; j++) {
          const g = grid.get(i * 5000 + j);
          if (g) for (const q of g) if ((q[0] - x) ** 2 + (q[1] - y) ** 2 < s * s) { ok = false; break; }
        }
      }
      if (!ok) continue;
      const key = cx * 5000 + cy;
      if (!grid.has(key)) grid.set(key, []);
      grid.get(key).push([x, y]);
      pts.push([x, y]);
    }
    return pts;
  }

  function draw(id, pts, map) {
    const q = pts.map(map);
    document.getElementById(id).setAttribute("d", edgesOf(pts).map(e =>
      "M" + q[e[0]][0].toFixed(1) + " " + q[e[0]][1].toFixed(1) + "L" + q[e[1]][0].toFixed(1) + " " + q[e[1]][1].toFixed(1)).join(""));
  }

  // Catmull-Rom curve through the listed points.
  function smooth(list) {
    const out = [];
    for (let i = 0; i + 1 < list.length; i++) {
      const a = list[Math.max(0, i - 1)], b = list[i], c = list[i + 1], d = list[Math.min(list.length - 1, i + 2)];
      for (let t = 0; t < 1; t += 0.25) {
        out.push([0, 1].map(k => 0.5 * (2 * b[k] + (c[k] - a[k]) * t
          + (2 * a[k] - 5 * b[k] + 4 * c[k] - d[k]) * t * t
          + (3 * b[k] - a[k] - 3 * c[k] + d[k]) * t * t * t)));
      }
    }
    out.push(list[list.length - 1]);
    return out;
  }

  function distance(line, x, y) {
    let best = 1e9;
    for (let i = 0; i + 1 < line.length; i++) {
      const a = line[i], b = line[i + 1], dx = b[0] - a[0], dy = b[1] - a[1];
      const t = Math.max(0, Math.min(1, ((x - a[0]) * dx + (y - a[1]) * dy) / (dx * dx + dy * dy)));
      best = Math.min(best, Math.hypot(a[0] + t * dx - x, a[1] + t * dy - y));
    }
    return best;
  }
  const bump = (x, y, cx, cy, rx, ry) => Math.exp(-(((x - cx) / rx) ** 2) - ((y - cy) / ry) ** 2);

  const top = smooth([[264, 335], [272, 314], [285, 285], [300, 259], [320, 232], [345, 209], [375, 189], [410, 171], [450, 156], [500, 144], [550, 138], [600, 136], [650, 138], [700, 144], [760, 155], [810, 170], [860, 191], [897, 209], [917, 216], [950, 219]]);
  const right = [[975, 235], [992, 262], [1006, 305], [1017, 370], [1032, 440], [1040, 503], [988, 515]];
  const bottom = smooth([[930, 518], [890, 519], [820, 516], [750, 508]])
    .concat(smooth([[750, 508], [710, 513], [650, 516], [590, 514], [530, 507], [470, 494], [420, 473], [375, 447], [347, 424], [335, 408]]))
    .concat([[290, 390], [254, 370]]);
  const body = top.concat(right, bottom, [[262, 360]]);
  const toPath = list => "M" + list.map(v => v[0].toFixed(1) + " " + v[1].toFixed(1)).join("L");
  document.getElementById("bodyShape").setAttribute("d", toPath(body) + "z");
  document.getElementById("wingShape").setAttribute("d", toPath([[950, 219], [1130, 153], [1337, 75], [1540, -1], [1540, 90], [1342, 255], [1094, 463], [1060, 492], [1020, 510], [988, 515], [940, 500], [940, 230]]) + "z");
  document.getElementById("topEdge").setAttribute("d", toPath(top.concat([[1130, 153], [1340, 74]])));
  document.getElementById("bottomEdge").setAttribute("d", toPath(bottom));

  // Body: an outline-shaped disc whose radius is compressed towards the silhouette.
  const C = [720, 355];
  function reach(dx, dy) {
    for (let i = 0; i < body.length; i++) {
      const a = body[i], b = body[(i + 1) % body.length];
      const ex = b[0] - a[0], ey = b[1] - a[1], den = dx * ey - dy * ex;
      if (Math.abs(den) < 1e-9) continue;
      const t = ((a[0] - C[0]) * ey - (a[1] - C[1]) * ex) / den;
      const u = ((a[0] - C[0]) * dy - (a[1] - C[1]) * dx) / den;
      if (t > 0 && u >= 0 && u <= 1) return t;
    }
    return 1;
  }
  function project(x, y) {
    const dx = x - C[0], dy = y - C[1], R = reach(dx, dy), r = 1 / R;
    const k = r < 1e-4 ? 1.57 : Math.sin(Math.min(1, r) * Math.PI / 2) / r;
    const w = 0.85 - 0.8 * Math.exp(-(((Math.atan2(dy, dx) - 0.15) / 0.5) ** 4));
    const m = 1 - w + w * k;
    return [C[0] + dx * m, C[1] + dy * m];
  }
  const crease = [[262, 355], [340, 385], [450, 415], [600, 448], [760, 478], [925, 492]];
  const seam = [[900, 212], [950, 219], [985, 250], [1003, 290], [1012, 330], [1017, 372]];
  const bodyPts = scatter(250, 130, 1042, 520, 90000,
    (x, y) => reach(x - C[0], y - C[1]) > 1,
    (x, y) => {
      const p = project(x, y);
      let s = 8.2 + 8 * bump(p[0], p[1], 820, 410, 190, 50) + 7 * bump(p[0], p[1], 1000, 440, 60, 60);
      if (p[0] < 480) s -= (480 - p[0]) / 90;
      s = Math.min(s, 4 + distance(crease, p[0], p[1]) / 5, 4 + distance(seam, p[0], p[1]) / 8);
      return s;
    });
  draw("bodyMesh", bodyPts, q => project(q[0], q[1]));

  // Wing: a strip between the root and the tip, with a ridge along its length.
  const root = [[950, 219], [1000, 280], [1017, 370], [1034, 440], [1040, 505]];
  function wing(q) {
    const s = q[0] / 560, t = q[1] / 330;
    const g = t < 0.45 ? 0.38 * (0.3 * t / 0.45 + 0.7 * (1 - Math.cos(Math.PI * t / 0.45)) / 2)
      : 0.38 + 0.62 * Math.sin((t - 0.45) / 0.55 * Math.PI / 2);
    const k = Math.min(3, Math.floor(g * 4)), f = g * 4 - k;
    const lx = root[k][0] + (root[k + 1][0] - root[k][0]) * f;
    const ly = root[k][1] + (root[k + 1][1] - root[k][1]) * f;
    const ry = g < 0.38 ? 47 * g / 0.38 : 47 + 43 * (g - 0.38) / 0.62;
    return [lx + (1540 - lx) * s, ly + (ry - ly) * s];
  }
  const wingPts = scatter(0, 0, 560, 330, 40000, () => true, (x, y) => {
    const ridge = Math.abs(y - 148);
    const s = y < 148 ? 15 : 23;
    return Math.min(s, 9 + ridge / 4, 8 + (330 - y) / 7, (y < 190 ? 6 : 14) + x / 5);
  });
  draw("wingMesh", wingPts, wing);

  const legPts = scatter(0, 0, 120, 80, 6000, () => true, x => 7 + 5 * Math.sin(x / 120 * Math.PI));
  draw("legMesh", legPts, q => [1045 - 58 * Math.cos(q[0] / 120 * Math.PI), 462 + q[1]]);
})();
```
